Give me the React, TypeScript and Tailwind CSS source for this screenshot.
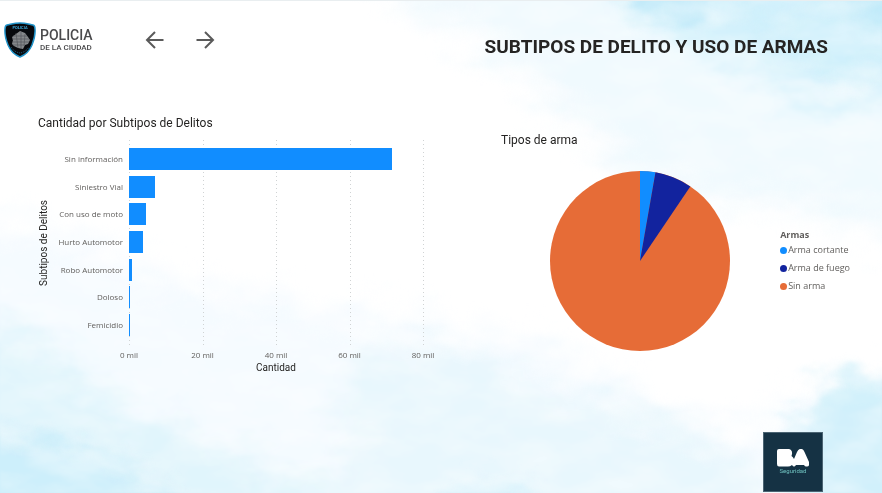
const subtypes = [
  { name: "Sin información", value: 71600 },
  { name: "Siniestro Vial", value: 7100 },
  { name: "Con uso de moto", value: 4600 },
  { name: "Hurto Automotor", value: 3700 },
  { name: "Robo Automotor", value: 800 },
  { name: "Doloso", value: 90 },
  { name: "Femicidio", value: 10 },
];
const maxValue = 80000;
const ticks = ["0 mil", "20 mil", "40 mil", "60 mil", "80 mil"];

const weapons = [
  { name: "Arma cortante", dot: "bg-[#118dff]" },
  { name: "Arma de fuego", dot: "bg-[#12239e]" },
  { name: "Sin arma", dot: "bg-[#e66c37]" },
];

function Watercolor() {
  return (
    <svg
      className="absolute inset-0 -z-10 h-full w-full"
      viewBox="0 0 882 493"
      preserveAspectRatio="none"
      aria-hidden="true"
    >
      <defs>
        <filter id="wash" x="-10%" y="-10%" width="120%" height="120%" colorInterpolationFilters="sRGB">
          <feGaussianBlur stdDeviation="8" result="b" />
          <feTurbulence type="fractalNoise" baseFrequency="0.025 0.045" numOctaves="5" seed="4" result="n" />
          <feDisplacementMap in="b" in2="n" scale="45" xChannelSelector="R" yChannelSelector="G" />
          <feGaussianBlur stdDeviation="1" />
        </filter>
        <filter id="soft" x="-20%" y="-20%" width="140%" height="140%" colorInterpolationFilters="sRGB">
          <feGaussianBlur stdDeviation="14" result="b" />
          <feTurbulence type="fractalNoise" baseFrequency="0.02 0.04" numOctaves="5" seed="9" result="n" />
          <feDisplacementMap in="b" in2="n" scale="60" xChannelSelector="R" yChannelSelector="G" />
          <feGaussianBlur stdDeviation="1.5" />
        </filter>
        <filter id="mottle" x="0" y="0" width="100%" height="100%" colorInterpolationFilters="sRGB">
          <feTurbulence type="fractalNoise" baseFrequency="0.018 0.04" numOctaves="5" seed="21" />
          <feColorMatrix values="0 0 0 0 1  0 0 0 0 1  0 0 0 0 1  2 0 0 0 -0.6" />
          <feGaussianBlur stdDeviation="1" />
        </filter>
      </defs>
      <rect width="882" height="493" fill="#ffffff" />
      <g filter="url(#soft)">
        <path d="M340 -40 L450 25 L540 90 L610 150 L650 190 L790 205 L930 245 L930 -40Z" fill="#f0fafe" />
        <path d="M-50 225 L60 235 L200 290 L400 320 L560 350 L640 400 L740 440 L790 410 L930 370 L930 540 L-50 540Z" fill="#f5fbff" />
        <path d="M-50 310 L60 350 L120 410 L180 430 L330 485 L330 540 L-50 540Z" fill="#e0f5fc" />
        <path d="M350 360 L450 345 L530 385 L640 410 L740 450 L790 540 L330 540Z" fill="#e8f7fd" />
        <path d="M600 -40 L640 20 L740 60 L820 100 L930 90 L930 -40Z" fill="#d2f1fc" />
      </g>
      <g filter="url(#wash)">
        <path d="M600 -30 L640 18 L690 24 L720 -30Z" fill="#aee3f7" opacity=".6" />
        <path d="M700 10 L770 30 L830 82 L882 66 L930 60 L930 10Z" fill="#cbeffb" opacity=".5" />
        <path d="M850 -20 L856 24 L930 34 L930 -20Z" fill="#b4e6f8" opacity=".5" />
        <path d="M-40 430 L60 440 L110 460 L160 485 L220 540 L-40 540Z" fill="#bdeaf9" opacity=".55" />
        <path d="M800 430 L812 382 L850 372 L930 395 L930 540 L770 540Z" fill="#c8eefa" opacity=".8" />
        <path d="M450 488 L520 480 L560 540 L430 540Z" fill="#c9eefb" opacity=".6" />
      </g>
      <rect width="882" height="493" filter="url(#mottle)" opacity=".35" />
      <rect width="882" height="1" fill="#e9eef0" />
    </svg>
  );
}

function PoliceBadge() {
  return (
    <svg className="h-9 w-8 shrink-0" viewBox="0 0 32 36" aria-hidden="true">
      <path
        d="M16 1C11 1 8 2 3 3Q1 3.500 1 7C0.500 13 2 18 4 23C6.500 29 11 33 16 35C21 33 25.500 29 28 23C30 18 31.500 13 31 7Q31 3.500 29 3C24 2 21 1 16 1Z"
        fill="#07090d"
        stroke="#2193c9"
        strokeWidth="1.5"
      />
      <text x="16" y="7" textAnchor="middle" fontSize="4" fontWeight="700" fill="#3ba9da" fontFamily="Roboto, sans-serif">
        POLICIA
      </text>
      <path d="M16 9L21 11L24 15L26 18L24 22L21 23L19 27L14 26L10 24L8 22L9 18L8 15L12 12Z" fill="#85888b" />
      <path d="M9 14H23M8 17H25M9 20H25M9 23H21M12 11L14 26M17 10L17 27M21 12L20 24" stroke="#55585b" strokeWidth=".7" />
      <path d="M7 25Q10 30 16 31Q22 30 25 25" fill="none" stroke="#236c91" strokeWidth="1" strokeDasharray="1 1" />
    </svg>
  );
}

function ArrowButton({ label, d }: { label: string; d: string }) {
  return (
    <button type="button" aria-label={label} className="flex size-6 items-center justify-center">
      <svg className="size-5" viewBox="0 0 20 20" fill="none" stroke="#5a5a5a" strokeWidth="2" aria-hidden="true">
        <path d={d} />
      </svg>
    </button>
  );
}

function BarChart() {
  return (
    <section className="pt-6 pr-[18px] pl-[38px]">
      <h2 className="text-xs leading-4 text-[#252423]">Cantidad por Subtipos de Delitos</h2>
      <div className="mt-[9px] flex">
        <div className="flex w-3 shrink-0 justify-center pt-[60px]">
          <span className="rotate-180 self-start text-[10px] leading-3 whitespace-nowrap text-[#252423] [writing-mode:vertical-rl]">
            Subtipos de Delitos
          </span>
        </div>
        <div className="min-w-0 flex-1">
          <div className="relative pt-[5px] pb-2">
            <div className="absolute inset-y-0 right-0 left-[79px] flex justify-between">
              {ticks.map((t) => (
                <div
                  key={t}
                  className="-mr-px w-px bg-[repeating-linear-gradient(to_bottom,#d0d3d4_0px,#d0d3d4_1px,transparent_1px,transparent_4px)]"
                />
              ))}
            </div>
            <div className="relative grid h-[194px] grid-rows-7">
              {subtypes.map((s) => (
                <div key={s.name} className="flex items-center">
                  <span className="w-[79px] shrink-0 pr-1.5 text-right font-['Open_Sans','Noto_Sans',sans-serif] text-[8px] leading-3 whitespace-nowrap text-[#605e5c]">
                    {s.name}
                  </span>
                  <div className="h-[22px] flex-1">
                    <div className="h-full min-w-px bg-[#118dff]" style={{ width: `${(s.value / maxValue) * 100}%` }} />
                  </div>
                </div>
              ))}
            </div>
          </div>
          <div className="ml-[79px] flex justify-between pt-0.5 font-['Open_Sans','Noto_Sans',sans-serif] text-[8px] leading-3 text-[#605e5c]">
            {ticks.map((t) => (
              <span key={t} className="flex w-0 justify-center whitespace-nowrap">
                {t}
              </span>
            ))}
          </div>
          <p className="ml-[79px] pt-px text-center text-[10px] leading-3 text-[#252423]">Cantidad</p>
        </div>
      </div>
    </section>
  );
}

function WeaponPie() {
  return (
    <section className="pt-[41px] pr-8 pl-[60px]">
      <h2 className="text-xs leading-4 text-[#252423]">Tipos de arma</h2>
      <div className="mt-[23px] flex items-center justify-between pl-[49px]">
        <svg className="size-[180px] shrink-0" viewBox="-90 -90 180 180" role="img" aria-label="Tipos de arma">
          <circle r="90" fill="#e66c37" />
          <path d="M0 0L0 -90A90 90 0 0 1 15.500 -88.700Z" fill="#118dff" />
          <path d="M0 0L15.500 -88.700A90 90 0 0 1 50.300 -74.600Z" fill="#12239e" />
        </svg>
        <div className="pt-0.5 font-['Open_Sans','Noto_Sans',sans-serif] text-[9px] text-[#605e5c]">
          <h3 className="leading-3 font-bold">Armas</h3>
          <ul className="flex flex-col">
            {weapons.map((w) => (
              <li key={w.name} className="flex h-[18px] items-center gap-px whitespace-nowrap">
                <span className={`size-[7px] rounded-full ${w.dot}`} />
                {w.name}
              </li>
            ))}
          </ul>
        </div>
      </div>
    </section>
  );
}

export default function App() {
  return (
    <div className="relative isolate flex min-h-screen flex-col overflow-hidden font-[Roboto,'Noto_Sans',sans-serif]">
      <Watercolor />
      <header className="flex items-start justify-between pr-[54px] pl-1">
        <div className="flex items-center pt-[22px]">
          <PoliceBadge />
          <div className="ml-1 w-[53px] whitespace-nowrap text-[#4a4a4c]">
            <p className="text-[14px] leading-4 font-medium">POLICIA</p>
            <p className="text-[8px] leading-[10px] font-medium">DE LA CIUDAD</p>
          </div>
          <nav className="ml-[50px] flex gap-[26px]">
            <ArrowButton label="Página anterior" d="M18.500 10H2M10 2L2 10L10 18" />
            <ArrowButton label="Página siguiente" d="M1.500 10H18M10 2L18 10L10 18" />
          </nav>
        </div>
        <h1 className="pt-[33px] text-[19px] leading-7 font-bold text-[#252423]">SUBTIPOS DE DELITO Y USO DE ARMAS</h1>
      </header>
      <main className="grid grid-cols-2 pt-[30px]">
        <BarChart />
        <WeaponPie />
      </main>
      <footer className="mt-auto flex justify-end pr-[59px] pb-px">
        <div className="flex size-[60px] flex-col items-center border border-[#4b6473] bg-[#153244] pt-4">
          <svg className="h-[18px] w-8" viewBox="0 0 32 18" role="img" aria-label="BA">
            <path
              d="M2 0H12Q15.500 1 15 5L14.500 7Q16 8 17 10L20 3Q22 -1 25 0Q26.500 0.500 27.500 3L32 13Q33 17 30 17.500Q28 18 27 16H19Q17 19 15 16Q13 17.500 11 17.500H2Q0 17.500 0 15V2Q0 0 2 0Z"
              fill="#fff"
            />
          </svg>
          <span className="text-[6px] leading-2 text-[#6fc3c0]">Seguridad</span>
        </div>
      </footer>
    </div>
  );
}
